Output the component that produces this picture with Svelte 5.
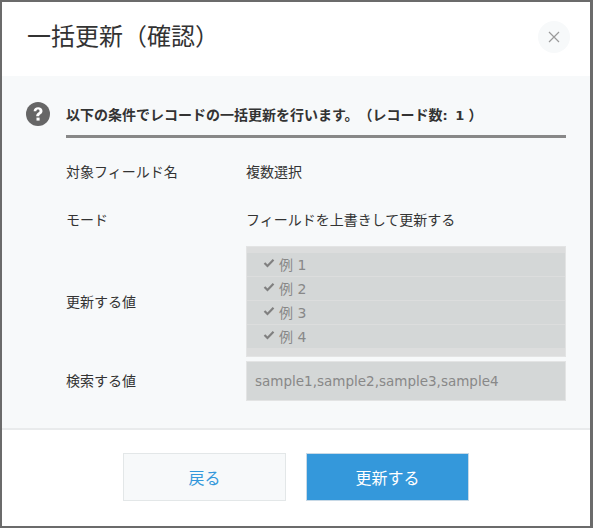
<script>
  const items = ['1', '2', '3', '4'];
</script>

<div class="frame">
  <div class="dialog">
    <header class="head">
      <h1>一括更新（確認）</h1>
      <button class="close" aria-label="閉じる">
        <svg width="12" height="12" viewBox="0 0 12 12"><path d="M1 1 L11 11 M11 1 L1 11" stroke="#9a9a9a" stroke-width="1.2" fill="none"/></svg>
      </button>
    </header>
    <main class="body">
      <div class="msg">
        <svg class="q" width="24" height="24" viewBox="0 0 24 24">
          <circle cx="12" cy="12" r="12" fill="#666"/>
          <path d="M7.6 9.2c.2-2.6 2-4 4.500-4 2.600 0 4.400 1.500 4.400 3.700 0 1.600-.9 2.500-2 3.300-1 .7-1.300 1.100-1.300 2.100h-3c0-1.800.5-2.700 1.800-3.600 1-.7 1.500-1.100 1.500-1.800 0-.8-.6-1.300-1.500-1.300-1 0-1.600.6-1.700 1.600z" fill="#fff"/>
          <rect x="10.500" y="15.600" width="3.100" height="3" fill="#fff"/>
        </svg>
        <p>以下の条件でレコードの一括更新を行います。（レコード数<span class="count">: 1 </span>）</p>
      </div>
      <dl class="rows">
        <div class="row r1"><dt>対象フィールド名</dt><dd>複数選択</dd></div>
        <div class="row r2"><dt>モード</dt><dd>フィールドを上書きして更新する</dd></div>
        <div class="row r3">
          <dt>更新する値</dt>
          <dd class="box list">
            {#each items as it}
              <div class="item">
                <svg width="12" height="10" viewBox="0 0 12 10"><path d="M1.500 5 L4.500 8 L10.500 1.800" stroke="#808080" stroke-width="2.200" fill="none"/></svg>
                <span>例 {it}</span>
              </div>
            {/each}
          </dd>
        </div>
        <div class="row r4">
          <dt>検索する値</dt>
          <dd class="box input"><span class="sample">sample1,sample2,sample3,sample4</span></dd>
        </div>
      </dl>
    </main>
    <footer class="foot">
      <button class="btn back">戻る</button>
      <button class="btn go">更新する</button>
    </footer>
  </div>
</div>

<style>
  :global(body) { margin: 0; background: #4a4a4a; }
  .frame {
    width: 593px; height: 528px; box-sizing: border-box;
    padding: 2px 3px 2px 2px; background: #6b6b6b;
    font-family: "DejaVu Sans", "Noto Sans CJK JP", sans-serif; color: #333;
    text-spacing-trim: space-all; line-height: 20px;
  }
  .count { font-size: 13px; word-spacing: 3px; padding-right: 4px; }
  .sample { font-size: 13.5px; }
  .dialog { width: 588px; height: 524px; background: #fff; display: flex; flex-direction: column; }
  .head { height: 74px; box-sizing: border-box; flex: none; display: flex; align-items: center; justify-content: space-between; padding: 0 20px 4px 25px; }
  h1 { margin: 0; font-size: 24px; font-weight: 400; color: #333; line-height: 1; }
  .close { width: 32px; height: 32px; border: 0; padding: 0; border-radius: 50%; background: #f7f9fa; display: flex; align-items: center; justify-content: center; }
  .body { height: 354px; flex: none; box-sizing: border-box; background: #f7f9fa; border-bottom: 2px solid #e9ebec; padding: 24px 24px 0 24px; }
  .msg { position: relative; padding-left: 40px; }
  .q { position: absolute; left: 0; top: 2px; }
  .msg p { margin: 0; height: 38px; line-height: 30px; box-sizing: border-box; font-size: 14px; font-weight: 700; color: #333; border-bottom: 3px solid #888; white-space: nowrap; }
  .rows { margin: 0; padding: 0 0 0 40px; display: flex; flex-direction: column; }
  .row { display: flex; align-items: center; font-size: 14px; }
  .r1 { margin-top: 10px; height: 48px; }
  .r2 { height: 48px; }
  .r3 { margin-top: 2px; height: 111px; }
  .r4 { margin-top: 4px; height: 40px; }
  dt { width: 180px; flex: none; }
  dd { margin: 0; flex: 1; min-width: 0; }
  .box { box-sizing: border-box; align-self: stretch; background: #d4d7d7; border: 1px solid #e3e4e4; color: #888; }
  .list { padding: 6px 0 8px; background: #dcdddd; display: flex; flex-direction: column; gap: 1px; }
  .item { height: 23px; background: #d4d7d7; display: flex; align-items: center; padding-left: 16px; gap: 4px; }
  .item svg { margin-top: -3px; }
  .input { display: flex; align-items: center; padding-left: 8px; }
  .foot { flex: 1; display: flex; justify-content: center; align-items: flex-start; gap: 20px; padding-top: 23px; }
  .btn { width: 163px; height: 48px; font-family: inherit; font-size: 16px; padding: 0; border: 1px solid; }
  .back { background: #f7f9fa; border-color: #e3e7e8; color: #3498db; }
  .go { background: #3498db; border-color: #c8d9e6; color: #fff; }
</style>
